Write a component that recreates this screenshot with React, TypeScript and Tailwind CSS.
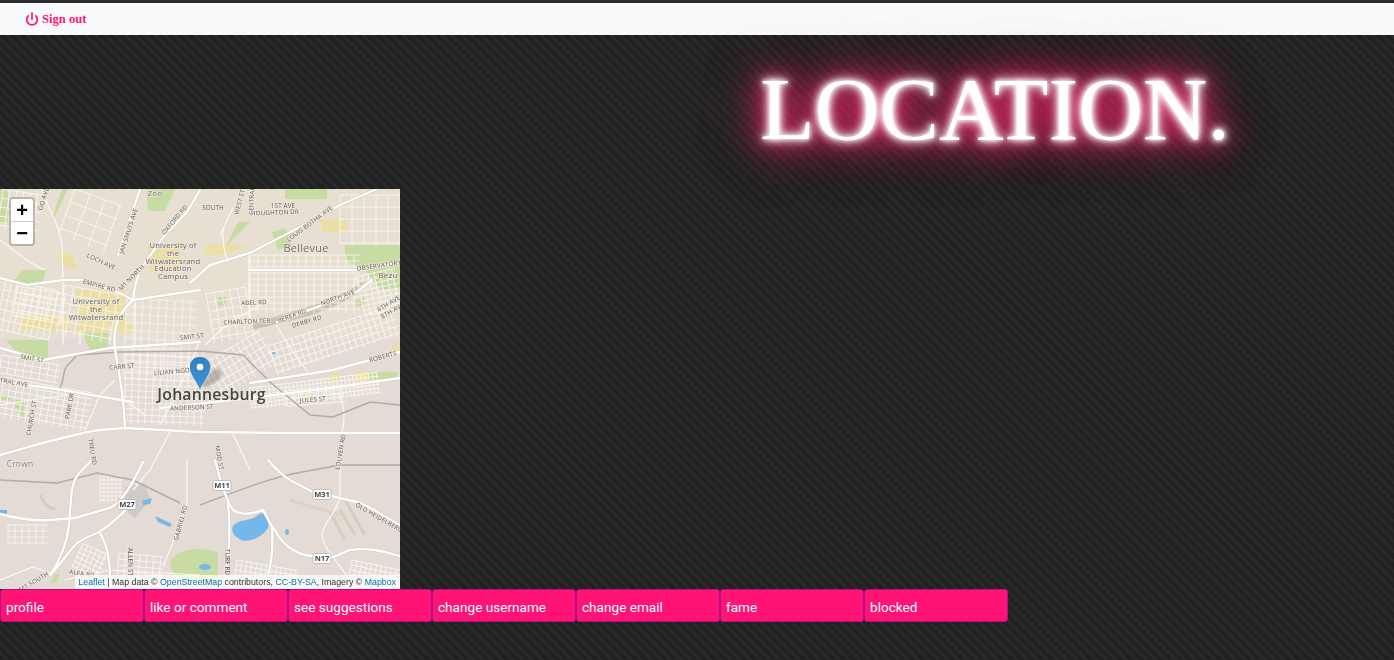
import React from "react";
import { Power } from "lucide-react";

type Patch = { x: number; y: number; w: number; h: number; r: number; a: number; b: number };
const patches: Patch[] = [
  { x: 0, y: 192, w: 40, h: 40, r: 8, a: 7, b: 9 }, { x: 0, y: 285, w: 55, h: 50, r: 12, a: 6, b: 10 },
  { x: 65, y: 196, w: 50, h: 50, r: 20, a: 16, b: 14 }, { x: 15, y: 290, w: 50, h: 30, r: 10, a: 8, b: 6 },
  { x: 60, y: 290, w: 60, h: 50, r: 10, a: 9, b: 9 }, { x: 125, y: 300, w: 70, h: 80, r: 3, a: 8, b: 8 },
  { x: 250, y: 255, w: 110, h: 58, r: 0, a: 8, b: 6 }, { x: 210, y: 290, w: 40, h: 50, r: -10, a: 8, b: 9 },
  { x: 340, y: 195, w: 60, h: 50, r: 0, a: 12, b: 12 }, { x: 270, y: 325, w: 130, h: 30, r: -18, a: 6, b: 7 },
  { x: 360, y: 272, w: 40, h: 40, r: -12, a: 6, b: 5 }, { x: 125, y: 350, w: 80, h: 75, r: 2, a: 7, b: 6 },
  { x: 205, y: 345, w: 70, h: 38, r: -30, a: 6, b: 8 }, { x: 250, y: 380, w: 130, h: 22, r: -7, a: 4, b: 4 },
  { x: 0, y: 385, w: 90, h: 40, r: 10, a: 7, b: 6 }, { x: 0, y: 360, w: 60, h: 18, r: 10, a: 8, b: 6 },
  { x: 8, y: 525, w: 40, h: 18, r: 0, a: 7, b: 6 }, { x: 100, y: 476, w: 22, h: 26, r: 0, a: 4, b: 4 },
  { x: 76, y: 548, w: 28, h: 28, r: 25, a: 5, b: 5 }, { x: 118, y: 555, w: 45, h: 22, r: 5, a: 7, b: 6 },
  { x: 235, y: 565, w: 60, h: 20, r: 10, a: 5, b: 5 }, { x: 350, y: 565, w: 50, h: 16, r: 12, a: 5, b: 5 },
  { x: 285, y: 388, w: 60, h: 16, r: -5, a: 8, b: 8 },
];

function Grid({ p }: { p: Patch }) {
  const lines: React.ReactElement[] = [];
  for (let i = 0; i <= p.w; i += p.a) lines.push(<line key={`v${i}`} x1={p.x + i} y1={p.y} x2={p.x + i} y2={p.y + p.h} />);
  for (let j = 0; j <= p.h; j += p.b) lines.push(<line key={`h${j}`} x1={p.x} y1={p.y + j} x2={p.x + p.w} y2={p.y + j} />);
  return <g transform={`rotate(${p.r} ${p.x + p.w / 2} ${p.y + p.h / 2})`}>{lines}</g>;
}

const mains = [
  "M50 575 C60 560 67 545 69 525 C71 505 70 488 76 478 C80 470 86 466 92 460",
  "M0 455 C20 450 40 443 55 440 C70 436 85 432 100 430 L125 428 L200 432 L290 433 L400 433",
  "M125 428 C124 405 120 375 115 350 C112 325 120 312 133 300 C134 288 137 278 141 268 L165 235 L187 212 L200 190",
  "M0 514 C15 518 35 521 50 520 L75 518 L110 508 C122 502 132 485 143 462",
  "M50 575 C62 562 70 550 77 543 C85 538 92 535 97 533 C110 526 120 515 128 508",
  "M100 533 C107 545 111 560 110 589",
  "M215 460 C220 480 226 500 233 510 C240 515 252 514 263 510 C268 518 270 525 275 530 C280 540 288 547 293 550 C300 554 306 556 313 556 L333 557 C340 555 345 551 350 550 C370 547 385 552 400 556",
  "M268 460 C275 468 282 475 290 480 L313 492 L357 502 C370 506 385 518 400 525",
  "M272 527 C273 545 273 565 263 589",
  "M228 503 C230 525 230 550 226 570",
  "M0 278 L27 285 L63 280 L83 280 L120 293 L133 300 L200 290",
  "M210 265 L250 253 L300 227 L340 205 L377 189",
  "M190 283 L210 265",
  "M249 270 H363 L400 262",
  "M277 322 L357 292 L372 280",
  "M0 348 L43 360 L110 348 L200 342",
  "M0 382 L50 388 L133 402",
  "M250 383 L333 370 L400 352",
  "M160 408 L250 398 L330 388 L400 378",
  "M118 255 L133 210 L140 189",
];
const thin = [
  "M42 190 C50 215 60 225 62 245 L63 285",
  "M63 285 V345",
  "M223 228 C222 245 225 255 228 262",
  "M233 208 L220 235",
  "M249 252 V325",
  "M163 567 C172 545 180 525 187 503 L187 460",
  "M0 580 L33 567 L50 573",
  "M65 580 L110 570 L200 575",
  "M340 460 V498 C335 515 322 525 322 535 C323 548 340 565 350 580",
  "M160 425 L190 365 L200 340",
  "M276 325 L293 352 L310 375",
  "M205 345 L230 322 L270 300",
  "M80 330 V345 M135 285 L135 345",
  "M0 405 L30 400 L70 395",
  "M170 432 L150 470 L133 490",
  "M232 432 L250 470",
  "M85 430 L100 395 L115 380",
  "M340 395 C345 410 345 420 342 433",
  "M0 240 C15 250 25 262 45 270",
  "M145 415 L125 400",
];
const rails = [
  "M0 480 L57 483 L97 473 L133 480 L180 503",
  "M200 505 C240 490 270 478 297 473 L340 465 L400 465",
  "M60 388 C66 375 62 370 68 365 L77 355 L120 352 L200 351 L243 355 L270 382 L310 415 L333 417 L370 402 L400 405",
];

function L({ x, y, r = 0, s = 6.2, c = "#5c5a55", w = 500, children }: { x: number; y: number; r?: number; s?: number; c?: string; w?: number; children: React.ReactNode }) {
  return (
    <text x={x} y={y} fontSize={s} fill={c} fontWeight={w} textAnchor="middle" dominantBaseline="middle" transform={r ? `rotate(${r} ${x} ${y})` : undefined} stroke="#eee8df" strokeWidth={1.4} paintOrder="stroke" letterSpacing={0.2}>
      {children}
    </text>
  );
}

function Shield({ x, y, t }: { x: number; y: number; t: string }) {
  return (
    <g>
      <rect x={x - 9} y={y - 4.5} width={18} height={10} rx={1.5} fill="#fff" stroke="#aaa" strokeWidth={0.7} />
      <text x={x} y={y + 3} fontSize={7.5} fontWeight={700} fill="#444" textAnchor="middle">{t}</text>
    </g>
  );
}

function MapArt() {
  return (
    <svg viewBox="0 189 400 400" className="block w-[400px] h-[400px] [font-family:'Open_Sans',sans-serif] blur-[0.35px]">
      <rect x="0" y="189" width="400" height="400" fill="#e4dbd4" />
      <rect x="0" y="189" width="400" height="150" fill="#e6dfd2" />
      <g fill="#c7dca2">
        <path d="M0 189 H8 V222 H0Z" /><path d="M55 210 L62 189 H68 L52 222Z" /><path d="M147 189 H175 L165 211 H148Z" />
        <path d="M285 189 H327 V199 H285Z" /><path d="M345 245 H400 V289 H380 L365 270 L345 260Z" /><path d="M224 250 L238 222 L250 222 L232 240Z" />
        <path d="M272 232 L285 228 L292 245 L278 250Z" /><path d="M22 270 H46 L42 284 H12Z" /><path d="M6 340 H48 V358 H22Z" />
        <path d="M82 332 H108 V350 H90Z" /><path d="M0 395 H8 L24 420 V400 H0Z" />
        <path d="M365 372 H397 V381 H365Z" /><path d="M170 562 C180 545 205 548 218 552 V585 H195 C182 580 170 575 170 562Z" />
        <path d="M55 574 H60 L56 583 H50Z" /><path d="M218 297 H226 V306 H218Z" /><path d="M355 300 L365 298 L363 306 L355 306Z" />
      </g>
      <g fill="#ecdfa6">
        <path d="M148 245 H180 V272 H150Z" /><path d="M75 290 H125 V325 H80Z" /><path d="M20 315 H70 V330 H20Z" /><path d="M75 325 H108 V333 H75Z" />
        <path d="M112 325 H135 V333 H112Z" /><path d="M320 220 H347 V232 H322Z" /><path d="M205 245 H250 L225 255 H205Z" />
        <path d="M302 392 H312 V398 H302Z" /><path d="M330 373 H340 V381 H330Z" /><path d="M355 372 H368 V382 H355Z" /><path d="M60 250 L72 255 L78 270 L60 265Z" />
        <path d="M392 345 H400 V352 H392Z" />
      </g>
      <path d="M125 487 L145 483 L150 500 L135 518 L125 510Z" fill="#cfcbc6" />
      <path d="M252 325 C290 310 330 305 365 280 L365 288 C330 315 290 320 252 330Z" fill="#c9c1b4" />
      <g stroke="#d5cdc2" strokeWidth="3" fill="none"><path d="M40 495 C45 505 50 510 55 508" /><path d="M290 500 L340 515" opacity="0.6" /><path d="M345 500 L365 535" /><path d="M340 510 L355 535" /><path d="M330 512 L345 540" /></g>
      <g fill="#74b7ea">
        <path d="M233 526 C240 518 250 522 258 515 C266 510 270 518 268 528 C262 538 245 545 238 538 C233 535 231 530 233 526Z" />
        <ellipse cx="287" cy="532" rx="2" ry="3" /><path d="M142 501 L152 498 L150 504 L143 505Z" /><path d="M155 516 L172 524 L170 527 L158 522Z" /><path d="M0 510 H7 V515 H0Z" /><ellipse cx="205" cy="567" rx="6" ry="3" /><rect x="272" y="352" width="3" height="2" />
      </g>
      <g stroke="#faf7f2" strokeWidth="0.9" fill="none" opacity="0.95">
        {patches.map((p, i) => <Grid key={i} p={p} />)}
      </g>
      <g stroke="#fbf9f5" strokeWidth="1.2" fill="none">{thin.map((d) => <path key={d} d={d} />)}</g>
      <g stroke="#b3aca3" strokeWidth="1.5" fill="none">{rails.map((d) => <path key={d} d={d} />)}</g>
      <g stroke="#c9c2b8" strokeWidth="3.2" fill="none" strokeLinecap="round">{mains.map((d) => <path key={d} d={d} />)}</g>
      <g stroke="#ffffff" strokeWidth="2.4" fill="none" strokeLinecap="round">{mains.map((d) => <path key={d} d={d} />)}</g>

      <L x={155} y={194} s={8} c="#727066" w={400}>Zoo</L>
      <L x={175} y={220} r={-50}>OXFORD RD</L>
      <L x={129} y={231} r={-72}>JAN SMUTS AVE</L>
      <L x={44} y={199} r={-72}>OO AVE</L>
      <g>
        <L x={173} y={246} s={7.6} c="#66645c" w={400}>University of</L>
        <L x={173} y={254} s={7.6} c="#66645c" w={400}>the</L>
        <L x={173} y={262} s={7.6} c="#66645c" w={400}>Witwatersrand</L>
        <L x={173} y={269} s={7.6} c="#66645c" w={400}>Education</L>
        <L x={173} y={277} s={7.6} c="#66645c" w={400}>Campus</L>
        <L x={96} y={302} s={7.6} c="#66645c" w={400}>University of</L>
        <L x={96} y={310} s={7.6} c="#66645c" w={400}>the</L>
        <L x={96} y={318} s={7.6} c="#66645c" w={400}>Witwatersrand</L>
      </g>
      <L x={101} y={262} r={25}>LOCH AVE</L>
      <L x={99} y={286} r={15}>EMPIRE RD</L>
      <L x={132} y={278} r={-45}>M1 NORTH</L>
      <L x={283} y={206}>1ST AVE</L>
      <L x={275} y={213} r={-2}>HOUGHTON DR</L>
      <L x={310} y={224} r={-37}>LOUIS BOTHA AVE</L>
      <L x={306} y={249} s={11} c="#6e6c64" w={400}>Bellevue</L>
      <L x={379} y={266} r={-8}>OBSERVATORY</L>
      <L x={388} y={276} s={8} c="#666" w={400}>Bezu</L>
      <L x={254} y={303} r={-3}>ABEL RD</L>
      <L x={338} y={298} r={-20}>NORTH AVE</L>
      <L x={292} y={316} r={-20}>BEREA RD</L>
      <L x={247} y={322} r={-2}>CHARLTON TER</L>
      <L x={307} y={322} r={-17}>DERBY RD</L>
      <L x={389} y={304} r={-30}>6TH AVE</L>
      <L x={391} y={312} r={-30}>8TH AV</L>
      <L x={240} y={202} r={-75}>WEST ST</L>
      <L x={252} y={201} r={-88}>CENTRAL</L>
      <L x={213} y={208}>SOUTH</L>
      <L x={32} y={359} r={10}>SMIT ST</L>
      <L x={192} y={337} r={-5}>SMIT ST</L>
      <L x={122} y={367} r={-5}>CARR ST</L>
      <L x={172} y={372} r={-5}>LILIAN NGO</L>
      <L x={14} y={383} r={10}>TRAL AVE</L>
      <L x={32} y={418} r={-80}>CHURCH ST</L>
      <L x={70} y={406} r={-80}>PARK DR</L>
      <L x={92} y={452} r={80}>TREU RD</L>
      <L x={192} y={408} r={-3}>ANDERSON ST</L>
      <L x={313} y={400} r={-5}>JULES ST</L>
      <L x={383} y={357} r={-15}>ROBERTS</L>
      <L x={341} y={452} r={-80}>LOUVEN RD</L>
      <L x={219} y={458} r={80}>MOD ST</L>
      <L x={20} y={465} s={8.5} c="#8c8a82" w={400}>Crown</L>
      <L x={181} y={523} r={-75}>GABRIEL RD</L>
      <L x={82} y={574} r={8}>ALFA RD</L>
      <L x={34} y={582} r={-30}>M1 SOUTH</L>
      <L x={379} y={518} r={30}>OLD HEIDELBERG</L>
      <L x={227} y={562} r={90}>TURF RD</L>
      <L x={130} y={562} r={90}>ALLEN ST</L>
      <Shield x={127} y={504} t="M27" />
      <Shield x={222} y={485} t="M11" />
      <Shield x={322} y={494} t="M31" />
      <Shield x={322} y={558} t="N17" />
      <L x={211.5} y={395.5} s={15.8} c="#444444" w={600}>Johannesburg</L>
    </svg>
  );
}

function Marker() {
  return (
    <svg viewBox="0 0 42 34" className="absolute left-[190px] top-[168px] w-[42px] h-[34px]">
      <defs>
        <linearGradient id="pin" x1="0" y1="0" x2="0" y2="1">
          <stop offset="0" stopColor="#2e82c4" />
          <stop offset="1" stopColor="#3d93d6" />
        </linearGradient>
      </defs>
      <path d="M10 31 L22 14 C26 10 32 12 32 17 C32 23 20 29 10 31Z" fill="#000" opacity="0.22" className="blur-[1.5px]" />
      <path d="M10 31.5 C8 26 0 17 0 10 C0 4 4.5 0 10 0 C15.5 0 20 4 20 10 C20 17 12 26 10 31.5Z" fill="url(#pin)" stroke="#2a6f9f" strokeWidth="0.5" />
      <circle cx="10" cy="10" r="3.3" fill="#fff" />
    </svg>
  );
}

const tabs = ["profile", "like or comment", "see suggestions", "change username", "change email", "fame", "blocked"];

export default function App() {
  return (
    <div className="min-h-screen bg-[repeating-linear-gradient(45deg,#212121_0px,#212121_4px,#282828_4px,#282828_7px)] [font-family:'Liberation_Serif',serif]">
      <nav className="h-[35px] border-t-[3px] border-[#292b2c] bg-[#f8f9fa] flex items-center pl-[25px] gap-[3px] text-[#ff1475]">
        <Power size={14} strokeWidth={3} className="-mt-[1px]" />
        <span className="text-[12.6px] font-bold mt-[1px]">Sign out</span>
      </nav>
      <header className="h-[154px] pl-[760px] pt-[22px]">
        <h1 className="text-[89.5px] leading-[104px] text-white [text-shadow:0_0_4px_#fff,0_0_8px_#fff,0_0_12px_#fff,0_0_24px_#ff2a70,0_0_34px_#ff2a70,0_0_46px_#ff2a70,0_0_60px_#ff2a70]">LOCATION.</h1>
      </header>
      <section className="relative w-[400px] h-[400px] overflow-hidden">
        <MapArt />
        <div className="absolute left-[9px] top-[8px] w-[26px] rounded-[4px] border-2 border-black/20 bg-clip-padding [font-family:'Liberation_Sans',sans-serif] text-black font-bold">
          <div className="h-[23px] bg-white rounded-t-[2px] border-b border-[#ccc] flex items-center justify-center text-[20px] leading-none">+</div>
          <div className="h-[22px] bg-white rounded-b-[2px] flex items-center justify-center text-[20px] leading-none">−</div>
        </div>
        <Marker />
        <div className="absolute right-0 bottom-0 h-[14px] pl-[3px] pr-[4px] bg-white/75 text-[8.8px] leading-[14px] text-[#333] whitespace-nowrap [font-family:'Liberation_Sans',sans-serif]">
          <span className="text-[#0078a8]">Leaflet</span> | Map data © <span className="text-[#0078a8]">OpenStreetMap</span> contributors, <span className="text-[#0078a8]">CC-BY-SA</span>, Imagery © <span className="text-[#0078a8]">Mapbox</span>
        </div>
      </section>
      <div className="flex">
        {tabs.map((t) => (
          <div key={t} className="w-[144px] h-[33px] rounded-[3px] border border-[#b01085] bg-[#ff1475] pl-[5px] text-white text-[13.6px] leading-[34px] [font-family:'Roboto',sans-serif]">
            {t}
          </div>
        ))}
      </div>
    </div>
  );
}
